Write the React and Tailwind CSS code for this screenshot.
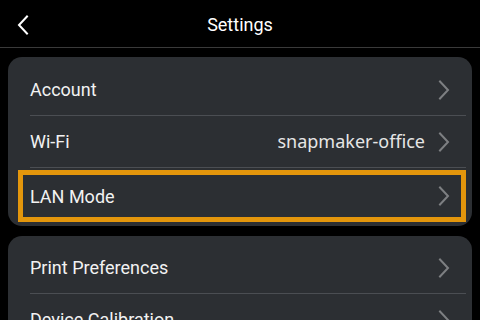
import React from 'react';

const Chevron = ({ className = '' }) => (
  <svg width="12" height="20" viewBox="0 0 12 20" fill="none" className={className}>
    <path d="M2 1.5 L10 10 L2 18.5" stroke="currentColor" strokeWidth="2" strokeLinecap="square" />
  </svg>
);

const Row = ({ label, value, active, tall }) => (
  <div
    className={`flex items-center pl-[7px] pr-[11px] ${tall ? 'h-[52px]' : 'h-[51px]'} border-[5px] ${active ? 'border-[#e3960c]' : 'border-transparent'}`}
  >
    <span className="flex-1 text-[18px] text-[#f2f2f2] font-['Roboto',sans-serif]">{label}</span>
    {value && (
      <span className="mr-[13px] text-[18px] text-[#e6e6e6] font-['Noto_Sans',sans-serif]">{value}</span>
    )}
    <Chevron className="text-[#7d7f82]" />
  </div>
);

const Divider = () => <div className="ml-[12px] h-px bg-[#4b4e53]" />;

export default function App() {
  return (
    <div className="w-[480px] h-[320px] overflow-hidden bg-black font-['Roboto',sans-serif]">
      <div className="relative h-[48px] pt-[2px] flex items-center justify-center border-b border-[#3a3a3a]">
        <svg width="12" height="20" viewBox="0 0 12 20" fill="none" className="absolute left-[17px] top-[15px] text-white">
          <path d="M10 1.5 L2 10 L10 18.5" stroke="currentColor" strokeWidth="2" strokeLinecap="square" />
        </svg>
        <span className="text-[18px] text-white">Settings</span>
      </div>

      <div className="mx-2 mt-[9px] rounded-[14px] bg-[#2c2f33] pl-[10px] pr-[6px] pt-[7px] pb-[4px]">
        <Row label="Account" />
        <Divider />
        <Row label="Wi-Fi" value="snapmaker-office" />
        <Divider />
        <div className="mt-[2px]">
          <Row label="LAN Mode" active tall />
        </div>
      </div>

      <div className="mx-2 mt-[10px] rounded-[14px] bg-[#2c2f33] pl-[10px] pr-[6px] pt-[6px] pb-[4px]">
        <Row label="Print Preferences" />
        <Divider />
        <Row label="Device Calibration" />
      </div>
    </div>
  );
}
